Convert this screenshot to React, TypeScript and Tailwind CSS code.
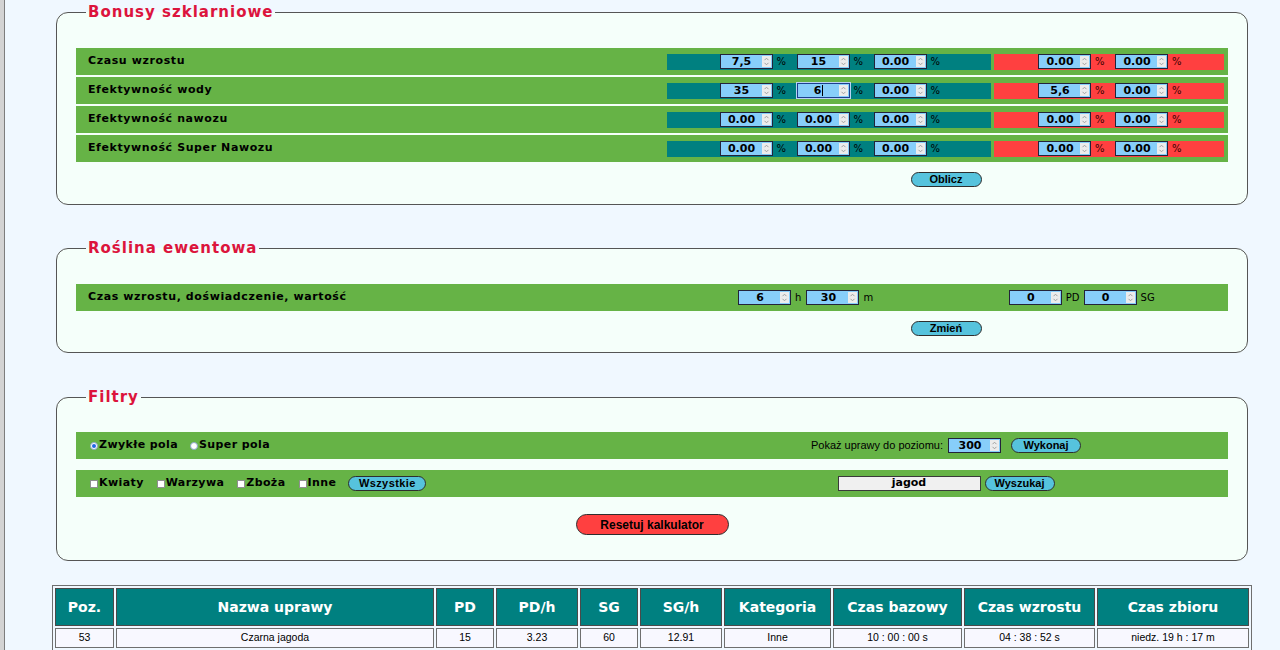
import React from "react";

const BONUS_ROWS = [
  { label: "Czasu wzrostu", teal: ["7,5", "15", "0.00"], red: ["0.00", "0.00"] },
  { label: "Efektywność wody", teal: ["35", "6", "0.00"], red: ["5,6", "0.00"], focus: 1 },
  { label: "Efektywność nawozu", teal: ["0.00", "0.00", "0.00"], red: ["0.00", "0.00"] },
  { label: "Efektywność Super Nawozu", teal: ["0.00", "0.00", "0.00"], red: ["0.00", "0.00"] },
];

const COLS = [
  { name: "Poz.", w: 59, v: "53" },
  { name: "Nazwa uprawy", w: 318, v: "Czarna jagoda" },
  { name: "PD", w: 58, v: "15" },
  { name: "PD/h", w: 82, v: "3.23" },
  { name: "SG", w: 58, v: "60" },
  { name: "SG/h", w: 82, v: "12.91" },
  { name: "Kategoria", w: 107, v: "Inne" },
  { name: "Czas bazowy", w: 129, v: "10 : 00 : 00 s" },
  { name: "Czas wzrostu", w: 131, v: "04 : 38 : 52 s" },
  { name: "Czas zbioru", w: 152, v: "niedz. 19 h : 17 m" },
];

function Spin() {
  return (
    <span className="flex h-full w-[9px] items-center justify-center bg-[#ececec]">
      <svg width="7" height="11" viewBox="0 0 7 11">
        <path d="M1.5 4.2 L3.5 2.2 L5.5 4.2" fill="none" stroke="#a0a0a0" strokeWidth="1" />
        <path d="M1.5 6.8 L3.5 8.8 L5.5 6.8" fill="none" stroke="#a0a0a0" strokeWidth="1" />
      </svg>
    </span>
  );
}

function Num({ v, focus }: { v: string; focus?: boolean }) {
  return (
    <div
      className={`flex h-[15px] w-[53px] items-stretch bg-[#87cefa] p-[1px] ${
        focus ? "border border-[#1d3f8f] outline outline-1 outline-[#b9d3f3]" : "border border-[#23233a]"
      }`}
    >
      <span className="flex flex-1 items-center justify-center text-[11px] leading-none font-bold text-black">
        {v}
        {focus && <span className="ml-[1px] inline-block h-[11px] w-[1px] bg-black" />}
      </span>
      <Spin />
    </div>
  );
}

function Pill({ children, w, red }: { children: React.ReactNode; w: string; red?: boolean }) {
  return (
    <button
      className={`${w} flex items-center justify-center rounded-full border border-[#2e2e2e] font-['Liberation_Sans',Arial,sans-serif] font-bold text-black ${
        red ? "h-[21px] bg-[#ff4040] text-[12px]" : "h-[15px] bg-[#56c3dd] text-[11px]"
      }`}
    >
      {children}
    </button>
  );
}

function Box({ title, children, className }: { title: string; children: React.ReactNode; className: string }) {
  return (
    <fieldset className={`mx-[4px] rounded-[12px] border border-[#555555] bg-[#f5fffa] px-[19px] ${className}`}>
      <legend className="ml-[10px] px-[2px] text-[15px] leading-[18px] font-bold tracking-[1px] text-[#dc143c]">
        {title}
      </legend>
      {children}
    </fieldset>
  );
}

function Radio({ on }: { on?: boolean }) {
  return (
    <span className="mr-[1px] flex h-[8px] w-[8px] items-center justify-center rounded-full border border-[#8da4c9] bg-white">
      {on && <span className="h-[4px] w-[4px] rounded-full bg-[#1f66e5]" />}
    </span>
  );
}

function Check() {
  return <span className="mr-[1px] h-[8px] w-[8px] border border-[#8f8f8f] bg-white" />;
}

export default function App() {
  return (
    <div className="flex min-h-[650px] bg-[#f0f8ff] font-['DejaVu_Sans',Verdana,sans-serif] text-black">
      <div className="w-[5px] shrink-0 border-r border-[#7d7d7d] bg-[#d3d3d3]" />
      <div className="ml-[47px] w-[1200px] shrink-0">
        {/* Bonusy */}
        <Box title="Bonusy szklarniowe" className="mt-[3px] pb-[17px]">
          <div className="mt-[27px] flex flex-col gap-[2px]">
            {BONUS_ROWS.map((r) => (
              <div key={r.label} className="flex h-[27px] items-center bg-[#66b346]">
                <div className="w-[588px] pl-[12px] text-[11px] font-bold tracking-[0.6px]">{r.label}</div>
                <div className="flex flex-1 items-center gap-[3px] pl-[3px] pr-[4px]">
                  <div className="flex h-[16px] w-[324px] items-center justify-center gap-[12px] bg-[#008080]">
                    {r.teal.map((v, i) => (
                      <div key={i} className="flex items-center">
                        <Num v={v} focus={r.focus === i} />
                        <span className="ml-[4px] w-[8px] text-[10px]">%</span>
                      </div>
                    ))}
                  </div>
                  <div className="flex h-[16px] flex-1 items-center justify-center gap-[12px] bg-[#ff4040]">
                    {r.red.map((v, i) => (
                      <div key={i} className="flex items-center">
                        <Num v={v} />
                        <span className="ml-[4px] w-[8px] text-[10px] text-[#3a0000]">%</span>
                      </div>
                    ))}
                  </div>
                </div>
              </div>
            ))}
          </div>
          <div className="mt-[10px] flex">
            <div className="w-[588px]" />
            <div className="flex flex-1 justify-center">
              <Pill w="w-[71px]">Oblicz</Pill>
            </div>
          </div>
        </Box>

        {/* Roślina */}
        <Box title="Roślina ewentowa" className="mt-[34px] pb-[16px]">
          <div className="mt-[27px] flex h-[27px] items-center bg-[#66b346]">
            <div className="w-[588px] pl-[12px] text-[11px] font-bold tracking-[0.6px]">
              Czas wzrostu, doświadczenie, wartość
            </div>
            <div className="flex flex-1 items-center">
              <div className="flex flex-1 items-center justify-center pl-[3px] text-[10px]">
                <Num v="6" />
                <span className="ml-[4px] mr-[5px]">h</span>
                <Num v="30" />
                <span className="ml-[4px] w-[9px]">m</span>
              </div>
              <div className="flex flex-1 items-center justify-center pr-[8px] text-[10px]">
                <Num v="0" />
                <span className="ml-[4px] mr-[4px]">PD</span>
                <Num v="0" />
                <span className="ml-[4px]">SG</span>
              </div>
            </div>
          </div>
          <div className="mt-[10px] flex">
            <div className="w-[588px]" />
            <div className="flex flex-1 justify-center">
              <Pill w="w-[71px]">Zmień</Pill>
            </div>
          </div>
        </Box>

        {/* Filtry */}
        <Box title="Filtry" className="mt-[35px] pb-[25px]">
          <div className="mt-[26px] flex h-[27px] items-center bg-[#66b346]">
            <div className="flex w-[588px] items-center pl-[14px] text-[11px] font-bold tracking-[0.4px]">
              <Radio on />
              <span>Zwykłe pola</span>
              <span className="ml-[12px]" />
              <Radio />
              <span>Super pola</span>
            </div>
            <div className="flex flex-1 items-center justify-center">
              <span className="mr-[5px] font-['Liberation_Sans',Arial,sans-serif] text-[11px]">
                Pokaż uprawy do poziomu:
              </span>
              <Num v="300" />
              <span className="ml-[10px]">
                <Pill w="w-[70px]">Wykonaj</Pill>
              </span>
            </div>
          </div>
          <div className="mt-[11px] flex h-[27px] items-center bg-[#66b346]">
            <div className="flex w-[588px] items-center pl-[14px] text-[11px] font-bold tracking-[0.4px]">
              <Check />
              <span>Kwiaty</span>
              <span className="ml-[13px]" />
              <Check />
              <span>Warzywa</span>
              <span className="ml-[13px]" />
              <Check />
              <span>Zboża</span>
              <span className="ml-[13px]" />
              <Check />
              <span>Inne</span>
              <span className="ml-[12px]">
                <Pill w="w-[78px]">Wszystkie</Pill>
              </span>
            </div>
            <div className="flex flex-1 items-center justify-center">
              <div className="flex h-[15px] w-[143px] items-center justify-center border border-[#3a3a3a] bg-[#f0f0f0] text-[11px] font-bold">
                jagod
              </div>
              <span className="ml-[4px]">
                <Pill w="w-[70px]">Wyszukaj</Pill>
              </span>
            </div>
          </div>
          <div className="mt-[17px] flex justify-center">
            <Pill w="w-[153px]" red>
              Resetuj kalkulator
            </Pill>
          </div>
        </Box>

        {/* Tabela */}
        <table className="mt-[24px] w-[1200px] table-fixed border-separate border-spacing-[2px] border border-[#6f6f6f]">
          <colgroup>
            {COLS.map((c) => (
              <col key={c.name} style={{ width: c.w }} />
            ))}
          </colgroup>
          <thead>
            <tr>
              {COLS.map((c) => (
                <th
                  key={c.name}
                  className="h-[38px] border border-[#4a4a4a] bg-[#008080] text-center text-[14px] font-bold text-white"
                >
                  {c.name}
                </th>
              ))}
            </tr>
          </thead>
          <tbody>
            {[0].map((r) => (
              <tr key={r}>
                {COLS.map((c) => (
                  <td
                    key={c.name}
                    className="h-[20px] border border-[#6f6f6f] bg-[#f8f8ff] text-center font-['Liberation_Sans',Arial,sans-serif] text-[10.5px] text-black"
                  >
                    {c.v}
                  </td>
                ))}
              </tr>
            ))}
          </tbody>
        </table>
      </div>
    </div>
  );
}
